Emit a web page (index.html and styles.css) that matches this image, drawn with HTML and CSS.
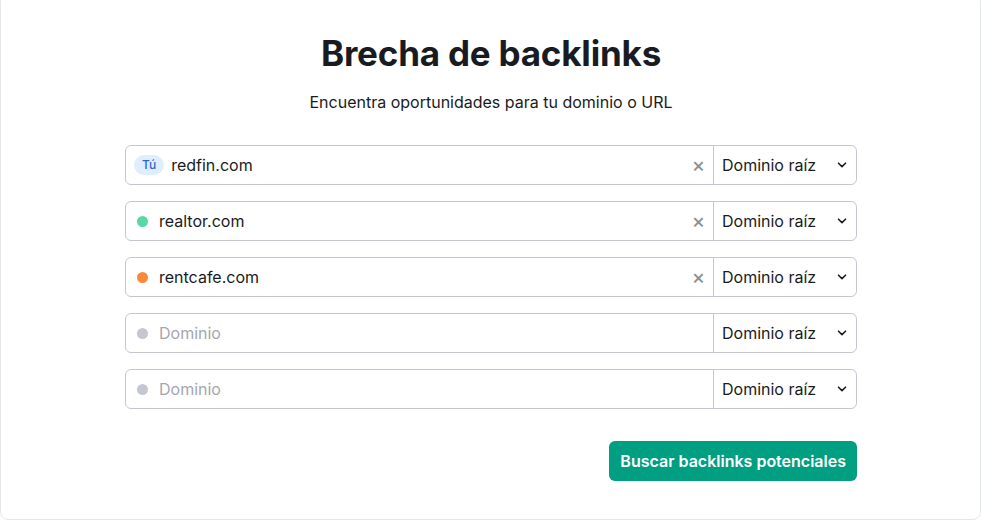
FILE: index.html
```html
<!DOCTYPE html>
<html lang="es">
<head>
<meta charset="UTF-8" />
<meta name="viewport" content="width=device-width, initial-scale=1" />
<title>Brecha de backlinks</title>
<link rel="stylesheet" href="styles.css">
</head>
<body>

<div class="card">
  <h1>Brecha de backlinks</h1>
  <p class="subtitle">Encuentra oportunidades para tu dominio o URL</p>

  <form class="domains">
    <!-- Own domain -->
    <div class="row">
      <div class="field">
        <span class="you">Tú</span>
        <span class="value">redfin.com</span>
        <span class="clear">&times;</span>
      </div>
      <div class="select">Dominio raíz <svg class="chev" width="10" height="6" viewBox="0 0 10 6"><path d="M1.5 1.2 5 4.6 8.5 1.2" fill="none" stroke="#191b23" stroke-width="1.6" stroke-linecap="round" stroke-linejoin="round"/></svg></div>
    </div>

    <div class="row">
      <div class="field">
        <span class="dot green"></span>
        <span class="value">realtor.com</span>
        <span class="clear">&times;</span>
      </div>
      <div class="select">Dominio raíz <svg class="chev" width="10" height="6" viewBox="0 0 10 6"><path d="M1.5 1.2 5 4.6 8.5 1.2" fill="none" stroke="#191b23" stroke-width="1.6" stroke-linecap="round" stroke-linejoin="round"/></svg></div>
    </div>

    <div class="row">
      <div class="field">
        <span class="dot orange"></span>
        <span class="value">rentcafe.com</span>
        <span class="clear">&times;</span>
      </div>
      <div class="select">Dominio raíz <svg class="chev" width="10" height="6" viewBox="0 0 10 6"><path d="M1.5 1.2 5 4.6 8.5 1.2" fill="none" stroke="#191b23" stroke-width="1.6" stroke-linecap="round" stroke-linejoin="round"/></svg></div>
    </div>

    <div class="row">
      <div class="field">
        <span class="dot gray"></span>
        <span class="value empty">Dominio</span>
      </div>
      <div class="select">Dominio raíz <svg class="chev" width="10" height="6" viewBox="0 0 10 6"><path d="M1.5 1.2 5 4.6 8.5 1.2" fill="none" stroke="#191b23" stroke-width="1.6" stroke-linecap="round" stroke-linejoin="round"/></svg></div>
    </div>

    <div class="row">
      <div class="field">
        <span class="dot gray"></span>
        <span class="value empty">Dominio</span>
      </div>
      <div class="select">Dominio raíz <svg class="chev" width="10" height="6" viewBox="0 0 10 6"><path d="M1.5 1.2 5 4.6 8.5 1.2" fill="none" stroke="#191b23" stroke-width="1.6" stroke-linecap="round" stroke-linejoin="round"/></svg></div>
    </div>

    <div class="actions">
      <button type="button" class="submit">Buscar backlinks potenciales</button>
    </div>
  </form>
</div>

</body>
</html>
```

FILE: styles.css
```css
/* Page */
body {
  margin: 0;
  background: #fff;
  font-family: Inter, "Noto Sans", sans-serif;
  color: #191b23;
}

/* Outer card */
.card {
  margin-top: -6px;
  height: 526px;
  box-sizing: border-box;
  border: 1px solid #e6e7ea;
  border-radius: 8px;
  padding: 36px 0 0 1px;
}

h1 {
  margin: 0;
  text-align: center;
  font-size: 35px;
  line-height: 44px;
  font-weight: 700;
  letter-spacing: -0.2px;
}

.subtitle {
  margin: 17px 0 0;
  text-align: center;
  font-size: 16px;
  line-height: 20px;
}

/* Domain rows */
.domains {
  width: 732px;
  margin: 33px auto 0;
  display: flex;
  flex-direction: column;
  gap: 16px;
}

.row {
  display: flex;
  height: 40px;
  box-sizing: border-box;
  border: 1px solid #c4c7cf;
  border-radius: 6px;
}

.field {
  flex: 1;
  display: flex;
  align-items: center;
  padding: 0 8px 0 11px;
  border-right: 1px solid #c4c7cf;
  font-size: 16px;
}

.value {
  flex: 1;
}

.value.empty {
  color: #a4a7b0;
}

.you {
  background: #dfeeff;
  color: #2467d0;
  font-size: 12px;
  font-weight: 500;
  line-height: 20px;
  padding: 0 8px;
  border-radius: 10px;
  margin: 0 7px 0 -3px;
}

.dot {
  width: 11px;
  height: 11px;
  border-radius: 50%;
  margin-right: 11px;
}

.dot.green { background: #59d8a6; }
.dot.orange { background: #f78a3b; }
.dot.gray { background: #c4c7cf; }

.clear {
  color: #8b8e98;
  font-size: 20px;
  line-height: 20px;
  font-weight: 500;
}

.select {
  width: 142px;
  display: flex;
  align-items: center;
  justify-content: space-between;
  padding: 0 9px 0 8px;
  box-sizing: border-box;
  font-size: 16px;
}

/* Submit */
.actions {
  display: flex;
  justify-content: flex-end;
  margin-top: 16px;
}

.submit {
  background: #009f81;
  color: #fff;
  border: none;
  border-radius: 6px;
  height: 40px;
  padding: 0 11px;
  font-family: Inter, "Noto Sans", sans-serif;
  font-size: 16px;
  font-weight: 600;
  cursor: pointer;
}
```
